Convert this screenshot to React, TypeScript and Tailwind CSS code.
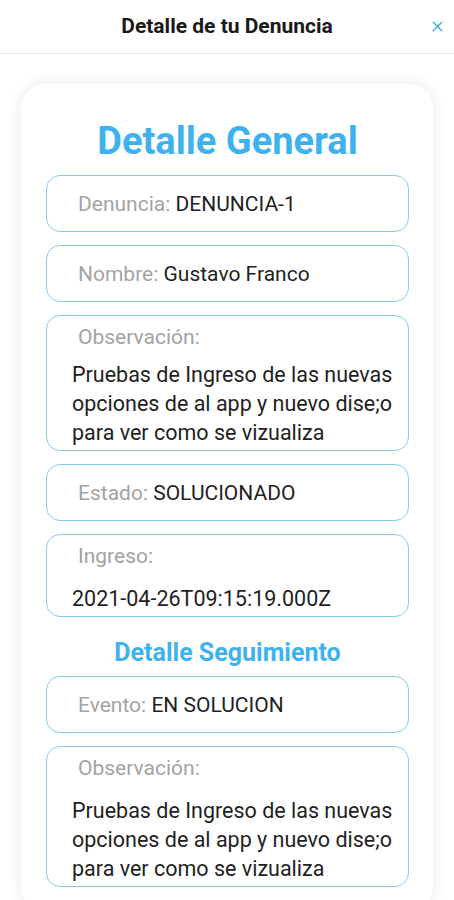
import React from 'react';
import { X } from 'lucide-react';

const InlineField: React.FC<{ label: string; value: string }> = ({ label, value }) => (
  <div className="flex h-[57px] items-center rounded-[14px] border-[1.5px] border-[#86cdea] px-[31px] text-[21px] leading-[28px]">
    <span className="whitespace-pre text-[#a3a3a3]">{label} </span>
    <span className="text-[#1f1f1f]">{value}</span>
  </div>
);

const BlockField: React.FC<{ label: string; value: string; gap: string }> = ({ label, value, gap }) => (
  <div className="rounded-[14px] border-[1.5px] border-[#86cdea] pt-[7px] pb-[3px] pl-[25px] pr-[3px] text-[21px]">
    <div className="pl-[6px] leading-[28px] text-[#a3a3a3]">{label}</div>
    <div className={`${gap} text-[21.5px] leading-[29px] text-[#1f1f1f]`}>{value}</div>
  </div>
);

const obs = 'Pruebas de Ingreso de las nuevas opciones de al app y nuevo dise;o para ver como se vizualiza';

const App: React.FC = () => {
  return (
    <div className="min-h-screen bg-white font-['Roboto',sans-serif]">
      <header className="relative flex h-[54px] items-center justify-center border-b-[1.5px] border-[#e6e6e6]">
        <h1 className="text-[21px] font-bold text-[#1a1a1a]">Detalle de tu Denuncia</h1>
        <X className="absolute right-[8px] top-[18px] h-[17px] w-[17px] text-[#4fb3df]" strokeWidth={2.2} />
      </header>

      <main className="px-[21px] pt-[30px]">
        <div className="rounded-[24px] bg-white px-[24px] pl-[25px] pt-[37px] pb-6 shadow-[0_0_16px_rgba(0,0,0,0.09)]">
          <h2 className="mb-[14px] text-center text-[38px] font-bold leading-[40px] text-[#3db2ee]">Detalle General</h2>

          <div className="flex flex-col gap-[13px]">
            <InlineField label="Denuncia:" value="DENUNCIA-1" />
            <InlineField label="Nombre:" value="Gustavo Franco" />
            <BlockField label="Observación:" value={obs} gap="mt-[9px]" />
            <InlineField label="Estado:" value="SOLUCIONADO" />
            <BlockField label="Ingreso:" value="2021-04-26T09:15:19.000Z" gap="mt-[14px]" />
          </div>

          <h3 className="mt-[22px] mb-[9px] text-center text-[25px] font-bold leading-[28px] text-[#3db2ee]">
            Detalle Seguimiento
          </h3>

          <div className="flex flex-col gap-[13px]">
            <InlineField label="Evento:" value="EN SOLUCION" />
            <BlockField label="Observación:" value={obs} gap="mt-[14px]" />
          </div>
        </div>
      </main>
    </div>
  );
};

export default App;
